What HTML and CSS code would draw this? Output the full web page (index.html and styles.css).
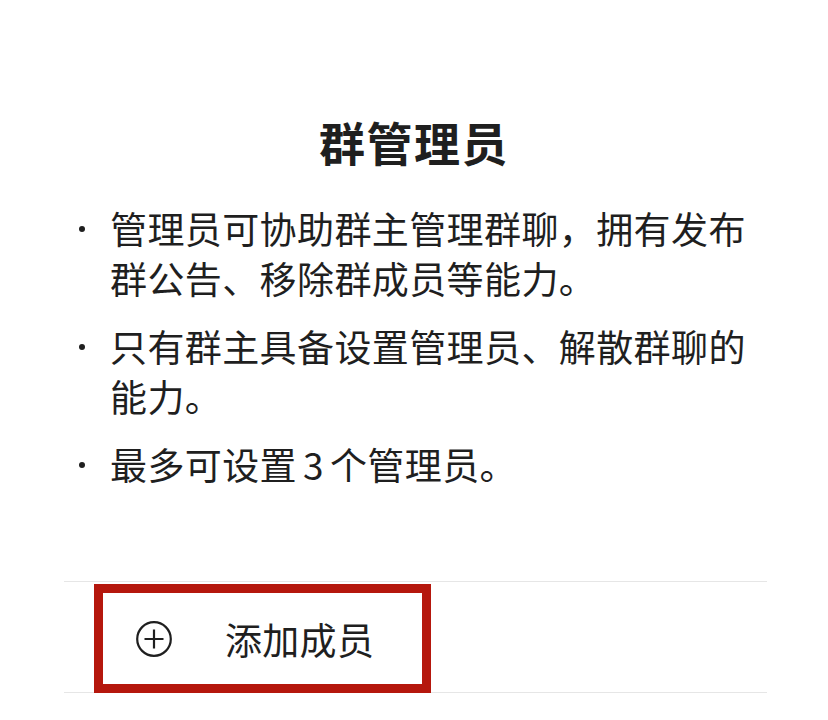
FILE: index.html
```html
<!DOCTYPE html>
<html lang="zh-CN">
<head>
  <meta charset="UTF-8">
  <meta name="viewport" content="width=device-width, initial-scale=1.0">
  <title>群管理员</title>
  <link rel="stylesheet" href="styles.css">
</head>
<body>
  <div class="page">
    <h2 class="title">群管理员</h2>

    <ul class="tips">
      <li>管理员可协助群主管理群聊，拥有发布群公告、移除群成员等能力。</li>
      <li>只有群主具备设置管理员、解散群聊的能力。</li>
      <li>最多可设置<span class="num">3</span>个管理员。</li>
    </ul>

    <div class="member-row">
      <div class="add-member">
        <svg class="add-icon" viewBox="0 0 36 36" width="36" height="36">
          <circle cx="18" cy="18" r="16.8" fill="none" stroke="#1f1f1f" stroke-width="2.2"/>
          <path d="M18 8.5v19M8.5 18h19" stroke="#1f1f1f" stroke-width="2.2" fill="none"/>
        </svg>
        <span class="add-label">添加成员</span>
      </div>
    </div>
  </div>
</body>
</html>
```

FILE: styles.css
```css
body {
  margin: 0;
  background: #fff;
  color: #1f1f1f;
  font-family: "Noto Sans CJK SC", "Noto Sans", sans-serif;
}
.page {
  padding-top: 111px;
}
.title {
  margin: 0;
  text-align: center;
  font-size: 46px;
  line-height: 60px;
  font-weight: 700;
  letter-spacing: 1.5px;
}
.tips {
  list-style: none;
  margin: 32px 0 0 0;
  padding: 0 60px 0 110px;
}
.tips li {
  position: relative;
  font-size: 37px;
  line-height: 50px;
  letter-spacing: 0.4px;
  margin-bottom: 18px;
}
.tips li::before {
  content: "";
  position: absolute;
  left: -31px;
  top: 23px;
  width: 6px;
  height: 6px;
  border-radius: 50%;
  background: #1f1f1f;
}
.num {
  margin: 0 6px;
}
.member-row {
  margin: 92px 61px 0 64px;
  height: 110px;
  border-top: 1px solid #e6e6e6;
  border-bottom: 1px solid #e6e6e6;
  display: flex;
}
.add-member {
  margin: 2px 0 -1px 30px;
  border: 9px solid #b5170d;
  display: flex;
  align-items: center;
  padding: 0 48px 0 33px;
}
.add-icon {
  display: block;
}
.add-label {
  margin-left: 53px;
  font-size: 37px;
  letter-spacing: 0.3px;
}
```
